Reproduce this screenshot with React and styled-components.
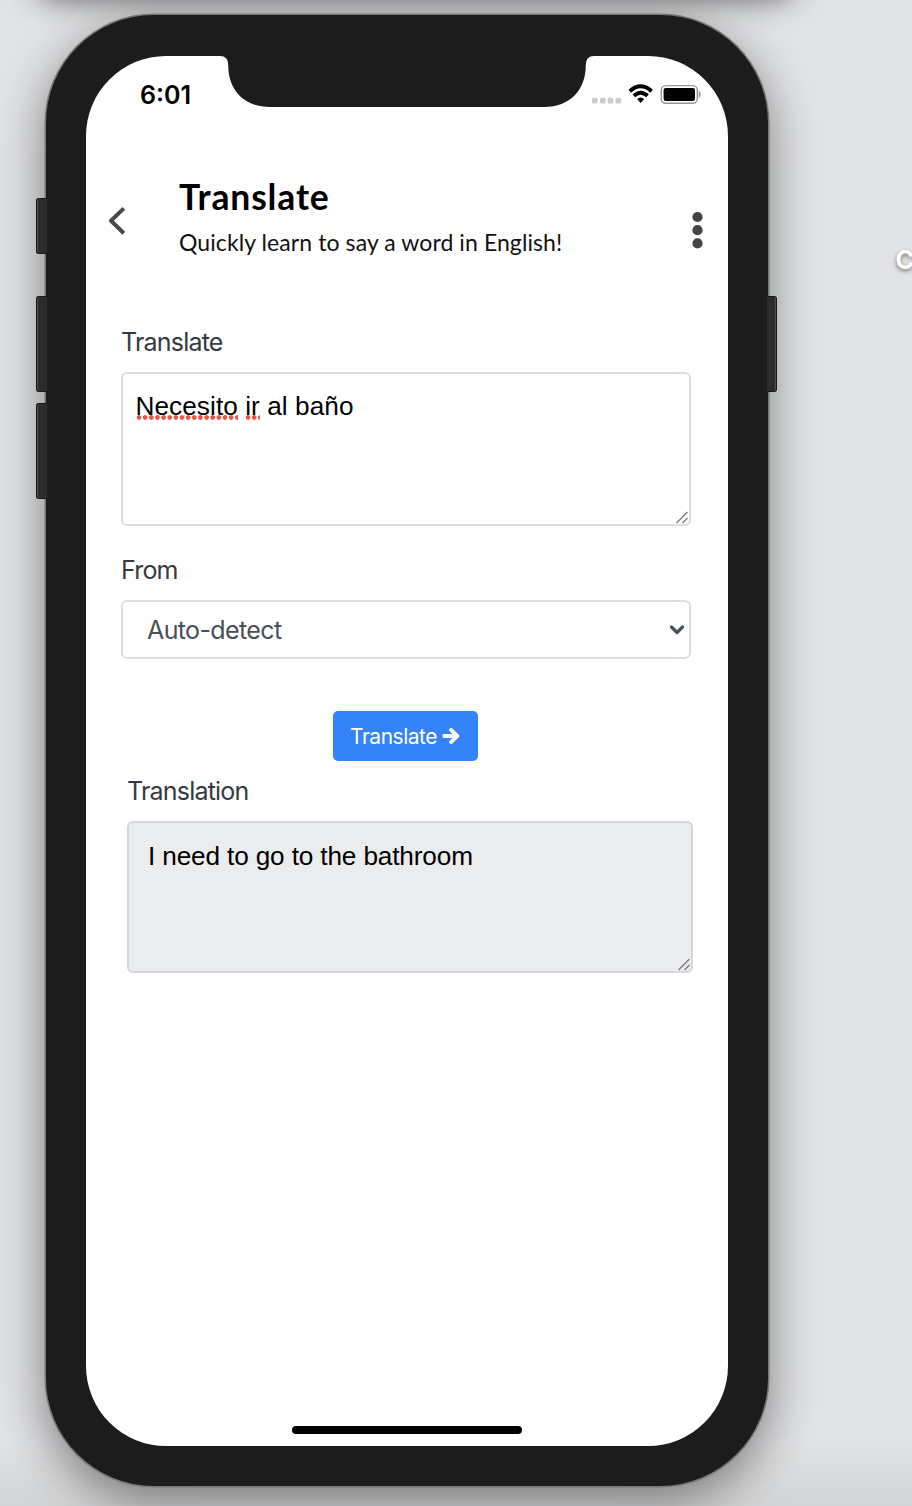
import React from 'react';
import styled, { createGlobalStyle } from 'styled-components';
import { FaArrowRight } from 'react-icons/fa';

const GlobalStyle = createGlobalStyle`
  * { box-sizing: border-box; }
  body { margin: 0; background: #e2e3e5; }
`;

const ui = '"Inter", "Liberation Sans", sans-serif';
const heading = '"Lato", "Open Sans", sans-serif';
const field = '"Liberation Sans", Arial, sans-serif';

const Desktop = styled.main`
  position: relative;
  width: 912px;
  height: 1506px;
  overflow: hidden;
  padding: 15px 0 0 46px;
  background: linear-gradient(#e2e3e5 0 1440px, #d3d4d5 1506px);
  font-family: ${ui};
`;

const WindowShadow = styled.div`
  position: absolute;
  left: 40px;
  top: -100px;
  width: 750px;
  height: 90px;
  border-radius: 0 0 20px 20px;
  box-shadow: 0 2px 32px 6px rgba(0, 0, 0, 0.62);
`;

const SideLetter = styled.span`
  position: absolute;
  left: 895.5px;
  top: 245px;
  font-size: 25px;
  line-height: 31px;
  font-weight: 700;
  color: #fff;
  text-shadow: 0 2px 4px rgba(0, 0, 0, 0.5);
`;

const SideKey = styled.i`
  position: absolute;
  top: ${(p) => p.$top}px;
  ${(p) => (p.$right ? 'left: 767px;' : 'left: 36px;')}
  width: ${(p) => (p.$right ? 10 : 11)}px;
  height: ${(p) => p.$height}px;
  border-radius: ${(p) => (p.$right ? '0 3px 3px 0' : '3px 0 0 3px')};
  background: #2c2c2c;
  border: 1px solid #161616;
  border-${(p) => (p.$right ? 'left' : 'right')}: 0;
  box-shadow: inset ${(p) => (p.$right ? '-1px' : '1px')} 0 1px #555;
`;

const Phone = styled.section`
  position: relative;
  width: 722px;
  height: 1471px;
  padding: 41px 40px 40px;
  border-radius: 108px;
  background: #1c1c1c;
  box-shadow: 0 0 0 1.5px #777876, 0 14px 50px 0 rgba(0, 0, 0, 0.47);
`;

const Screen = styled.div`
  position: relative;
  display: flex;
  flex-direction: column;
  height: 1390px;
  border-radius: 80px;
  background: #fff;
  overflow: hidden;
`;

const Notch = styled.svg`
  position: absolute;
  left: 130px;
  top: 0;
`;

const StatusBar = styled.div`
  display: flex;
  justify-content: space-between;
  align-items: center;
  height: 78px;
  padding: 0 26px 0 54px;
`;

const Clock = styled.time`
  font-size: 25px;
  font-weight: 600;
  color: #000;
  letter-spacing: 0;
`;

const Header = styled.header`
  display: flex;
  height: 193px;
  padding: 40px 25px 0 21px;
`;

const BackIcon = styled.svg`
  flex: none;
  margin: 31px 52px 0 0;
`;

const Heading = styled.div`
  flex: 1;
`;

const Title = styled.h1`
  margin: 0;
  font: 700 35.5px/46px ${heading};
  color: #000;
  letter-spacing: 0.85px;
  white-space: nowrap;
`;

const Subtitle = styled.p`
  margin: 0;
  font: 400 23px/45px ${heading};
  color: #111;
  letter-spacing: 0.09px;
  white-space: nowrap;
`;

const MenuIcon = styled.svg`
  flex: none;
  margin-top: 37px;
`;

const Form = styled.form`
  display: flex;
  flex-direction: column;
  padding: 0 37px 0 35px;
`;

const Label = styled.label`
  height: 30px;
  margin-bottom: 15px;
  font-size: 25px;
  line-height: 30px;
  color: #343a40;
  letter-spacing: -0.8px;
`;

const TextBox = styled.div`
  position: relative;
  height: ${(p) => p.$height}px;
  padding: ${(p) => p.$pad};
  border: 2px solid ${(p) => (p.$readOnly ? '#d3d6dc' : '#dbdfe5')};
  border-radius: 6px;
  background: ${(p) => (p.$readOnly ? '#ebecee' : '#fff')};
  font: 400 26.2px/30px ${field};
  letter-spacing: ${(p) => p.$track}px;
  color: #000;
`;

const Misspelled = styled.span`
  background: radial-gradient(circle at 3px 50%, #ed5545 2px, transparent 2.6px) 0 calc(100% - 1px) / 6.15px 5px repeat-x;
`;

const Grip = styled.svg`
  position: absolute;
  right: 0;
  bottom: -1px;
`;

const Select = styled.div`
  display: flex;
  align-items: center;
  justify-content: space-between;
  height: 59px;
  margin-bottom: 52px;
  padding: 0 4px 0 24px;
  border: 2px solid #dbdfe5;
  border-radius: 6px;
  font-size: 25px;
  letter-spacing: -0.62px;
  color: #495057;
`;

const FieldGroup = styled.div`
  display: flex;
  flex-direction: column;
  margin-bottom: ${(p) => p.$gap || 0}px;
`;

const ResultGroup = styled(FieldGroup)`
  margin: 15px -1.5px 0 6px;
`;

const SubmitButton = styled.button`
  display: flex;
  align-items: center;
  align-self: center;
  justify-content: center;
  gap: 5px;
  width: 145px;
  height: 50px;
  margin-right: 2px;
  padding: 0;
  border: 0;
  border-radius: 5px;
  background: #3584f7;
  color: #fff;
  font: 400 21px ${ui};
  letter-spacing: -0.5px;

  svg {
    stroke: #fff;
    stroke-width: 34px;
    stroke-linejoin: round;
    overflow: visible;
  }
`;

const HomeIndicator = styled.div`
  align-self: center;
  width: 230px;
  height: 8px;
  margin: auto 0 12px;
  border-radius: 4px;
  background: #000;
`;

function StatusIcons() {
  return (
    <svg width="112" height="24" viewBox="0 0 112 24">
      {[2, 10, 17.7, 25.5].map((x) => (
        <rect key={x} x={x} y="14.8" width="5.6" height="5.6" rx="1.5" fill="#cbcbcb" />
      ))}
      <g fill="none" stroke="#000" strokeWidth="3.9">
        <path d="M39.8 8.2Q50.7 -1.6 61.6 8.2" />
        <path d="M43.9 12.9Q50.7 6.6 57.5 12.9" />
      </g>
      <path d="M47.2 16.1Q50.7 13 54.2 16.1L50.7 20Z" fill="#000" />
      <rect x="71.3" y="2.6" width="36" height="17.6" rx="4.5" fill="none" stroke="#969696" strokeWidth="1.4" />
      <rect x="73.6" y="4.9" width="31.4" height="13" rx="2.2" fill="#000" />
      <path d="M109 8.3Q112 11.4 109 14.5Z" fill="#999" stroke="#999" strokeWidth="0.6" />
    </svg>
  );
}

function ResizeGrip() {
  return (
    <Grip width="14" height="14" viewBox="0 0 14 14" fill="none" stroke="#777" strokeWidth="1.3">
      <path d="M1.5 12L12.5 1M7.5 12L12.5 7" />
    </Grip>
  );
}

export default function App() {
  return (
    <>
      <GlobalStyle />
      <Desktop>
        <WindowShadow />
        <SideLetter>C</SideLetter>
        <Phone>
          <Screen>
            <Notch width="382" height="52" viewBox="0 0 382 52">
              <path
                d="M0 0H4Q12.2 0 12.2 9C12.2 34 28 51 54 51H328C354 51 369.8 34 369.8 9Q369.8 0 378 0H382Z"
                fill="#1c1c1c"
              />
            </Notch>
            <StatusBar>
              <Clock>6:01</Clock>
              <StatusIcons />
            </StatusBar>
            <Header>
              <BackIcon width="20" height="32" viewBox="0 0 20 32" fill="none" stroke="#4a4a4a" strokeWidth="4">
                <path d="M16.8 3.4L4 15.8L16.8 28.2" strokeLinejoin="round" />
              </BackIcon>
              <Heading>
                <Title>Translate</Title>
                <Subtitle>Quickly learn to say a word in English!</Subtitle>
              </Heading>
              <MenuIcon width="12" height="40" viewBox="0 0 12 40" fill="#444">
                <circle cx="6.5" cy="6" r="5.1" />
                <circle cx="6.5" cy="19.2" r="5.1" />
                <circle cx="6.5" cy="32.4" r="5.1" />
              </MenuIcon>
            </Header>
            <Form>
              <FieldGroup $gap={29}>
                <Label>Translate</Label>
                <TextBox $height={154} $pad="17px 12.5px" $track={0.06}>
                  <Misspelled>Necesito</Misspelled> <Misspelled>ir</Misspelled> al baño
                  <ResizeGrip />
                </TextBox>
              </FieldGroup>
              <FieldGroup>
                <Label>From</Label>
                <Select>
                  <span>Auto-detect</span>
                  <svg width="16" height="12" viewBox="0 0 16 12" fill="none" stroke="#495057" strokeWidth="3.2" strokeLinecap="round" strokeLinejoin="round">
                    <path d="M2.5 3L8 8.5L13.5 3" />
                  </svg>
                </Select>
              </FieldGroup>
              <SubmitButton type="button">
                <span>Translate</span>
                <FaArrowRight size={18} />
              </SubmitButton>
              <ResultGroup>
                <Label>Translation</Label>
                <TextBox $height={152} $pad="18px 19px" $track={-0.15} $readOnly>
                  I need to go to the bathroom
                  <ResizeGrip />
                </TextBox>
              </ResultGroup>
            </Form>
            <HomeIndicator />
          </Screen>
        </Phone>
        <SideKey $top={198} $height={56} />
        <SideKey $top={296} $height={96} />
        <SideKey $top={403} $height={96} />
        <SideKey $top={296} $height={96} $right />
      </Desktop>
    </>
  );
}
